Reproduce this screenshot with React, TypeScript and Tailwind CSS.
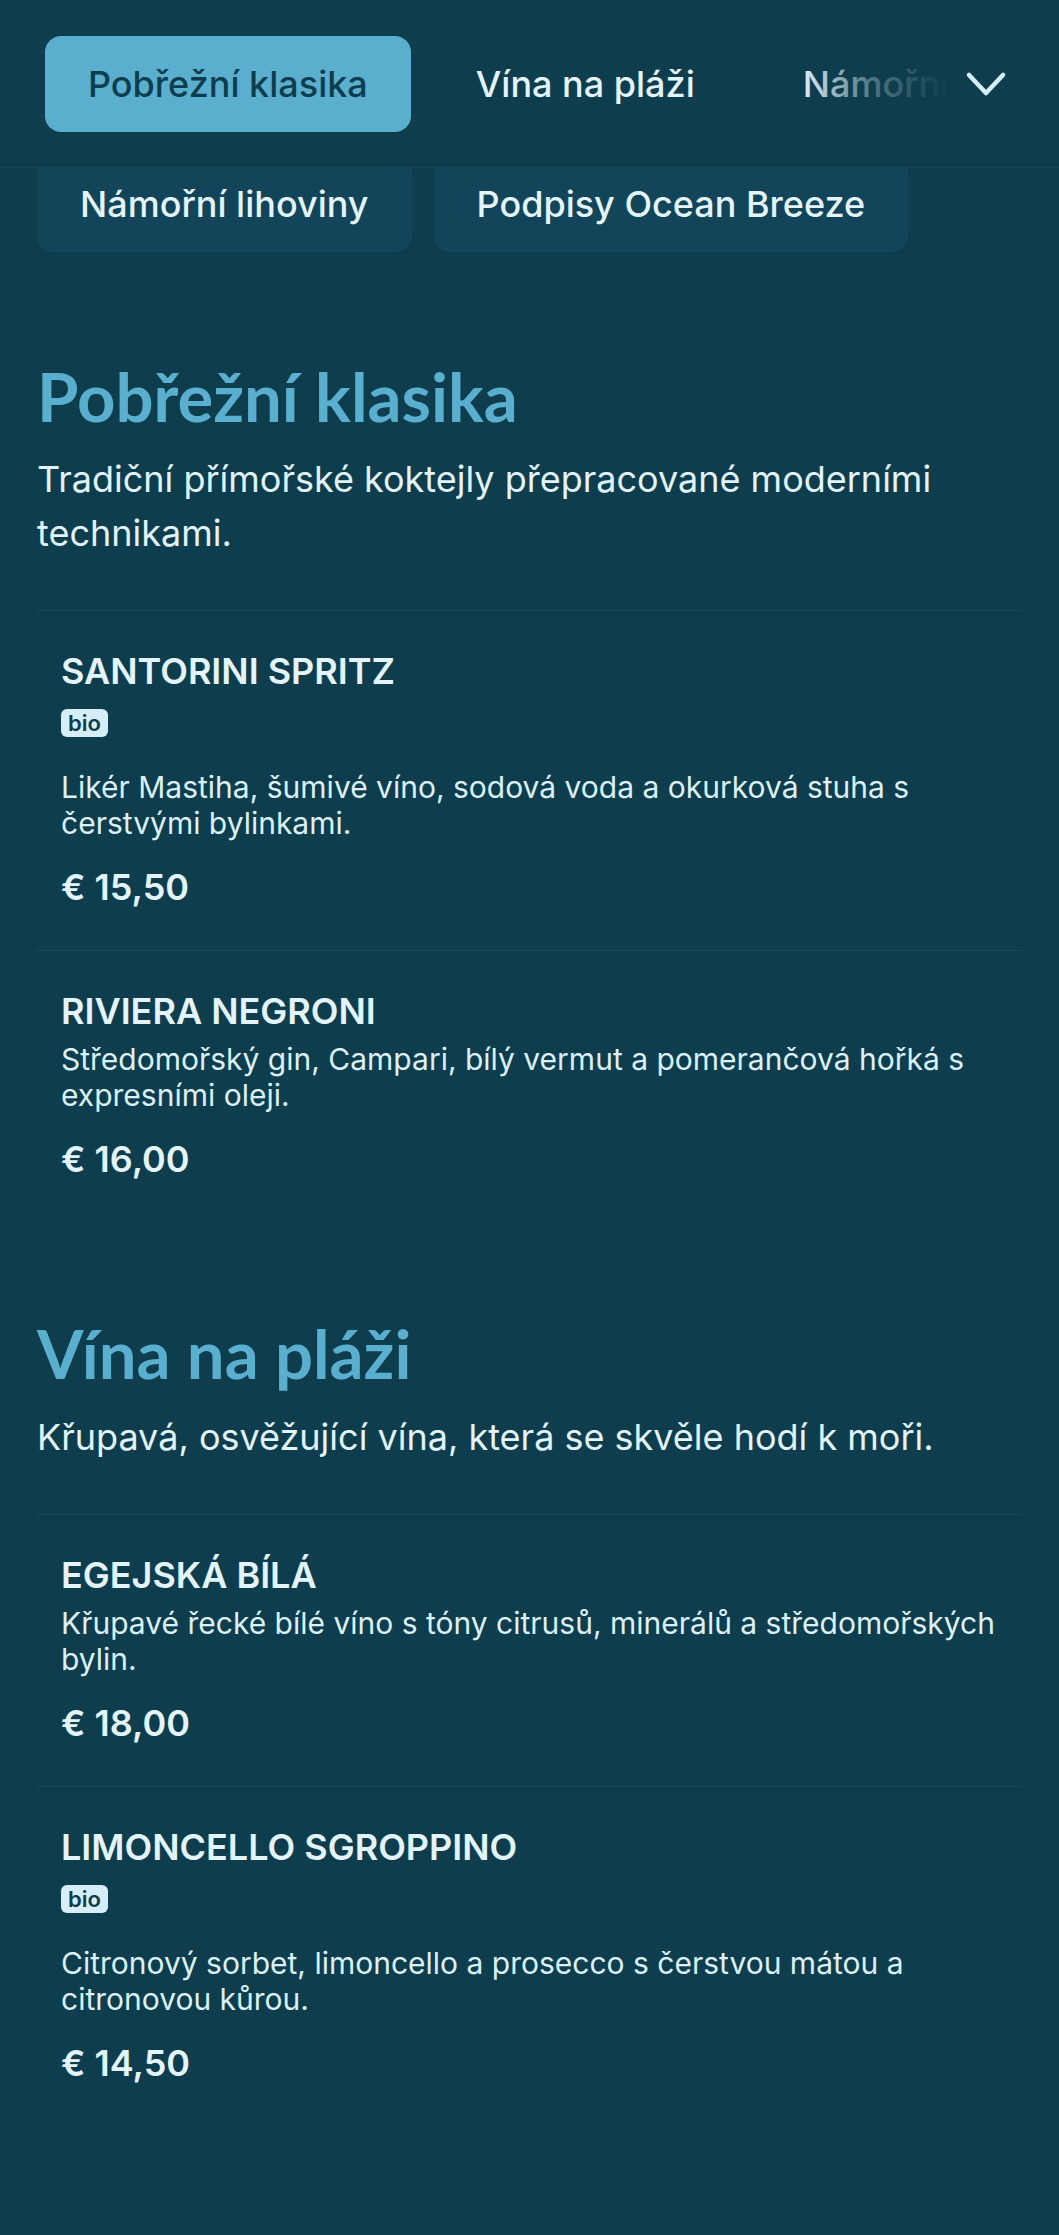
interface MenuItem {
  name: string
  tags?: string[]
  description: string
  price: string
}

interface MenuSection {
  id: string
  title: string
  intro: string
  items: MenuItem[]
}

const SECTIONS: MenuSection[] = [
  {
    id: 'coastal',
    title: 'Pobřežní klasika',
    intro: 'Tradiční přímořské koktejly přepracované moderními technikami.',
    items: [
      {
        name: 'Santorini Spritz',
        tags: ['bio'],
        description: 'Likér Mastiha, šumivé víno, sodová voda a okurková stuha s čerstvými bylinkami.',
        price: '€ 15,50',
      },
      {
        name: 'Riviera Negroni',
        description: 'Středomořský gin, Campari, bílý vermut a pomerančová hořká s expresními oleji.',
        price: '€ 16,00',
      },
    ],
  },
  {
    id: 'wines',
    title: 'Vína na pláži',
    intro: 'Křupavá, osvěžující vína, která se skvěle hodí k moři.',
    items: [
      {
        name: 'Egejská bílá',
        description: 'Křupavé řecké bílé víno s tóny citrusů, minerálů a středomořských bylin.',
        price: '€ 18,00',
      },
      {
        name: 'Limoncello Sgroppino',
        tags: ['bio'],
        description: 'Citronový sorbet, limoncello a prosecco s čerstvou mátou a citronovou kůrou.',
        price: '€ 14,50',
      },
    ],
  },
  {
    id: 'spirits',
    title: 'Námořní lihoviny',
    intro: 'Rumy, giny a destiláty inspirované dlouhými plavbami.',
    items: [
      {
        name: 'Kapitánův rum',
        description: 'Osmiletý tmavý rum podávaný s pomerančovou kůrou a kostkou ledu.',
        price: '€ 12,00',
      },
    ],
  },
]

const TABS = ['Pobřežní klasika', 'Vína na pláži', 'Námořní lihoviny', 'Podpisy Ocean Breeze']

// shared pill sizing for the header tabs and the category chips
const pillClass = 'shrink-0 whitespace-nowrap rounded-[16px] px-[43px] py-[28px] text-[36px] font-medium leading-[40px]'

function MenuRow({ item }: { item: MenuItem }) {
  const hasTags = item.tags && item.tags.length > 0
  return (
    <li className="border-t border-[#174a5c] px-[24px] pb-[43px] pt-[40px]">
      <h3 className="text-[36px] font-semibold uppercase leading-[40px] text-[#e4f4fb]">{item.name}</h3>
      {hasTags && (
        <div className="mt-[18px] flex gap-[8px]">
          {item.tags!.map((tag) => (
            <span
              key={tag}
              className="rounded-[6px] bg-[#d6eef8] px-[7px] text-[22px] font-semibold leading-[28px] text-[#0e3d4e]"
            >
              {tag}
            </span>
          ))}
        </div>
      )}
      <p className={`${hasTags ? 'mt-[32px]' : 'mt-[10px]'} text-[30px] leading-[36px] text-[#dcf0f8]`}>
        {item.description}
      </p>
      <p className="mt-[26px] text-[36px] font-semibold leading-[40px] text-[#e4f4fb]">{item.price}</p>
    </li>
  )
}

export default function App() {
  return (
    <div className="flex h-screen flex-col overflow-hidden bg-[#0e3d4e] font-['Inter','Noto_Sans',sans-serif] text-[#e4f4fb]">
      <header className="flex shrink-0 items-center border-b border-[#134557] bg-[#0e3d4e] pb-[35px] pl-[45px] pr-[45px] pt-[36px]">
        <div className="relative min-w-0 flex-1 overflow-hidden">
          <nav className="flex gap-[22px]">
            {TABS.map((tab, i) => (
              <button
                key={tab}
                type="button"
                className={`${pillClass} ${i === 0 ? 'bg-[#5bafce] text-[#0e3d4e]' : 'text-[#e4f4fb]'}`}
              >
                {tab}
              </button>
            ))}
          </nav>
          {/* fade the overflowing tabs into the header */}
          <div className="pointer-events-none absolute inset-y-0 right-0 w-[150px] bg-gradient-to-r from-transparent via-[#0e3d4e]/70 to-[#0e3d4e]" />
        </div>
        <button
          type="button"
          aria-label="Všechny kategorie"
          className="ml-[10px] flex h-[56px] w-[56px] shrink-0 items-center justify-center text-[#d6eef8]"
        >
          <svg width="44" height="28" viewBox="0 0 44 28" fill="none">
            <polyline
              points="5,5 22,23 39,5"
              stroke="currentColor"
              strokeWidth="4.5"
              strokeLinecap="round"
              strokeLinejoin="round"
            />
          </svg>
        </button>
      </header>

      <main className="min-h-0 flex-1 overflow-hidden px-[37px]">
        <div className="-mt-[12px] flex flex-wrap gap-[22px]">
          {TABS.slice(2).map((tab) => (
            <button key={tab} type="button" className={`${pillClass} bg-[#12445a] text-[#e4f4fb]`}>
              {tab}
            </button>
          ))}
        </div>

        <div className="flex flex-col gap-[91px] pt-[104px]">
          {SECTIONS.map((section) => (
            <section key={section.id} className="last:mt-[26px]">
              <h2 className="font-['Lato',sans-serif] text-[67px] font-bold leading-[1.2] text-[#5bafce]">
                {section.title}
              </h2>
              <p className="mt-[16px] text-[36px] leading-[54px] text-[#e2f3fa]">{section.intro}</p>
              <ul className="mt-[50px]">
                {section.items.map((item) => (
                  <MenuRow key={item.name} item={item} />
                ))}
              </ul>
            </section>
          ))}
        </div>
      </main>
    </div>
  )
}
